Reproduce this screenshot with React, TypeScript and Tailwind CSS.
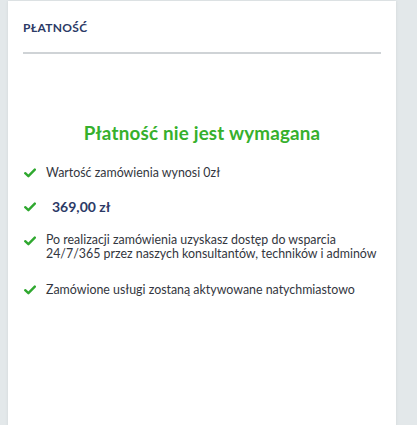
import React from "react";

const Check = () => (
  <svg width="12" height="10" viewBox="0 0 12 10" className="shrink-0">
    <path d="M1.2 5.2 L4.4 8.2 L10.8 1.6" fill="none" stroke="#2fa82f" strokeWidth="2.4" strokeLinecap="round" strokeLinejoin="round" />
  </svg>
);

export default function App() {
  return (
    <div className="w-[417px] h-[425px] bg-[#e3e8ea] pl-[8px] pr-[21px] pt-[1px] overflow-hidden" style={{ fontFamily: "Lato, 'Open Sans', sans-serif" }}>
      <div className="bg-white h-[440px] shadow-[0_0_3px_rgba(0,0,0,0.08)] px-[15px] pt-[20px]">
        <div className="text-[12px] font-bold text-[#2c3a66] tracking-[0.3px] leading-[14px]">PŁATNOŚĆ</div>
        <div className="mt-[17px] h-[2px] bg-[#cfd3d6]" />
        <div className="mt-[68px] text-center text-[18.8px] font-bold text-[#36b02c] leading-[22px] tracking-[0.2px]">Płatność nie jest wymagana</div>
        <ul className="mt-[21px] flex flex-col text-[12.4px] text-[#333640] leading-[15px]">
          <li className="flex items-center gap-[10px] pl-[1px]">
            <Check />
            <span>Wartość zamówienia wynosi 0zł</span>
          </li>
          <li className="flex items-center gap-[16px] pl-[1px] mt-[19px]">
            <Check />
            <span className="text-[14px] font-bold text-[#2c3a66]">369,00 zł</span>
          </li>
          <li className="flex items-start gap-[10px] pl-[1px] mt-[19px]">
            <span className="pt-[3px]"><Check /></span>
            <span className="leading-[14px]">Po realizacji zamówienia uzyskasz dostęp do wsparcia<br />24/7/365 przez naszych konsultantów, techników i adminów</span>
          </li>
          <li className="flex items-center gap-[10px] pl-[1px] mt-[21px]">
            <Check />
            <span>Zamówione usługi zostaną aktywowane natychmiastowo</span>
          </li>
        </ul>
      </div>
    </div>
  );
}
